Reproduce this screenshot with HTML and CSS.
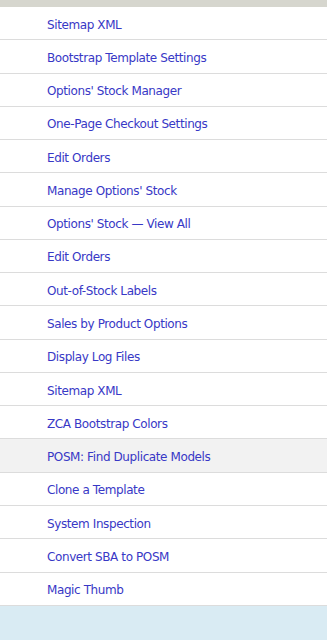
FILE: index.html
```html
<!DOCTYPE html>
<html lang="en">
<head>
    <meta charset="UTF-8">
    <meta name="viewport" content="width=device-width, initial-scale=1.0">
    <title>Tools</title>
    <link rel="stylesheet" href="styles.css">
</head>
<body>
    <div class="barra-topo"></div>
    <ul class="menu">
        <li><a href="#">Sitemap XML</a></li>
        <li><a href="#">Bootstrap Template Settings</a></li>
        <li><a href="#">Options' Stock Manager</a></li>
        <li><a href="#">One-Page Checkout Settings</a></li>
        <li><a href="#">Edit Orders</a></li>
        <li><a href="#">Manage Options' Stock</a></li>
        <li><a href="#">Options' Stock &mdash; View All</a></li>
        <li><a href="#">Edit Orders</a></li>
        <li><a href="#">Out-of-Stock Labels</a></li>
        <li><a href="#">Sales by Product Options</a></li>
        <li><a href="#">Display Log Files</a></li>
        <li><a href="#">Sitemap XML</a></li>
        <li><a href="#">ZCA Bootstrap Colors</a></li>
        <li class="ativo"><a href="#">POSM: Find Duplicate Models</a></li>
        <li><a href="#">Clone a Template</a></li>
        <li><a href="#">System Inspection</a></li>
        <li><a href="#">Convert SBA to POSM</a></li>
        <li><a href="#">Magic Thumb</a></li>
    </ul>
    <div class="rodape"></div>
</body>
</html>
```

FILE: styles.css
```css
* {
    margin: 0;
    padding: 0;
    box-sizing: border-box;
}
body {
    font-family: 'DejaVu Sans', Verdana, sans-serif;
    font-size: 12px;
    background-color: white;
    overflow: hidden;
}
.barra-topo {
    height: 7px;
    background-color: #d6d6ce;
}
.menu {
    list-style: none;
}
.menu li {
    height: 33.28px;
    border-bottom: 1px solid #dcdcdc;
    display: flex;
    align-items: center;
    padding-left: 47px;
    padding-top: 3px;
}
.menu li.ativo {
    background-color: #f2f2f2;
}
.menu a {
    color: #3838c6;
    text-decoration: none;
    letter-spacing: -0.4px;
}
.rodape {
    height: 40px;
    background-color: #d9ebf3;
}
```
